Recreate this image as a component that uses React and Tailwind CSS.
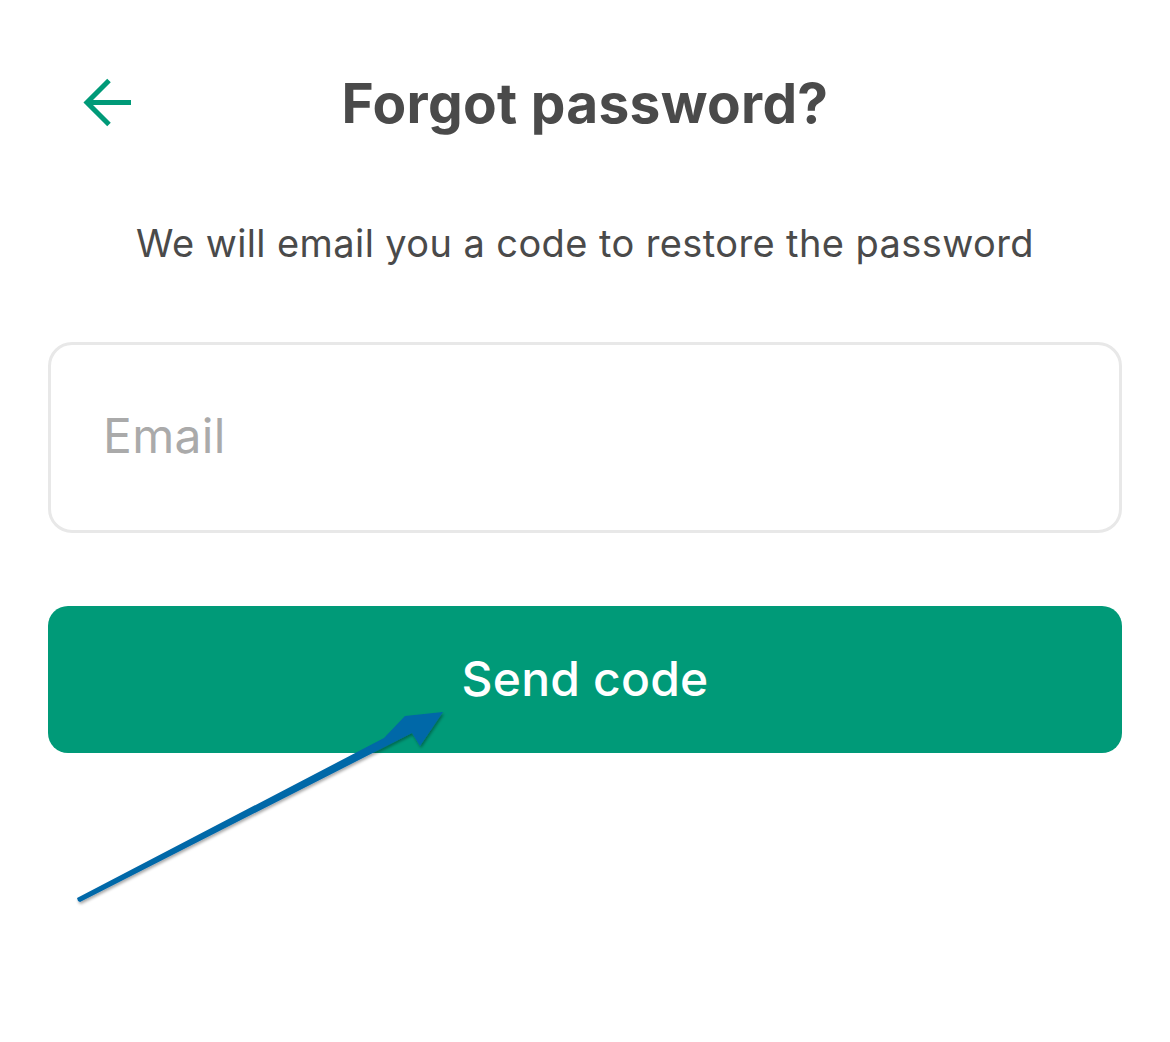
import React from 'react'

const App = () => {
  return (
    <div className="relative w-[1170px] h-[1042px] bg-white font-['Inter',sans-serif] overflow-hidden">
      {/* Header */}
      <div className="relative flex items-center justify-center h-[86px] mt-[60px]">
        <button className="absolute left-[80px] top-[16px]">
          <svg width="56" height="56" viewBox="0 0 56 56" fill="none" stroke="#009a78" strokeWidth="5" strokeLinecap="butt" strokeLinejoin="miter">
            <path d="M51 26.5H8" />
            <path d="M29 4.5L7 26.5L29 48.5" />
          </svg>
        </button>
        <h1 className="text-[55px] font-bold text-[#4a4a4a] tracking-[0.3px]">Forgot password?</h1>
      </div>

      {/* Subtitle */}
      <p className="mt-[69px] text-center text-[38px] text-[#4a4a4a] tracking-[0.4px]">
        We will email you a code to restore the password
      </p>

      {/* Email field */}
      <div className="mx-[48px] mt-[70px] h-[191px] rounded-[24px] border-[3px] border-[#e8e8e8] flex items-center px-[52px] pb-[4px]">
        <span className="text-[48px] text-[#aaaaaa] tracking-[0.3px]">Email</span>
      </div>

      {/* Button */}
      <button className="mx-[48px] mt-[73px] w-[1074px] h-[147px] rounded-[20px] bg-[#009a78] flex items-center justify-center pb-[2px]">
        <span className="text-[48px] font-medium text-white tracking-[0.2px]">Send code</span>
      </button>

      {/* Annotation arrow */}
      <svg className="absolute left-0 top-0 pointer-events-none" width="1170" height="1042">
        <defs>
          <filter id="sh" x="-10%" y="-10%" width="120%" height="120%">
            <feDropShadow dx="1" dy="2" stdDeviation="1.5" floodColor="#000" floodOpacity="0.35" />
          </filter>
        </defs>
        <polygon
          points="78,901 77,898 384,738 405,716 443,712 420,746 412,733 80,902"
          fill="#0467a8"
          filter="url(#sh)"
        />
      </svg>
    </div>
  )
}

export default App
